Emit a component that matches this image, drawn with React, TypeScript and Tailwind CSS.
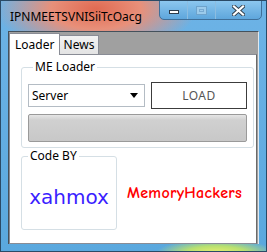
export default function App() {
  return (
    <div
      className="relative flex h-[252px] w-[267px] flex-col overflow-hidden border border-[#2a4a66] bg-[radial-gradient(ellipse_100px_45px_at_95px_8px,#e06a52_0%,#e8907a_45%,transparent_100%),radial-gradient(ellipse_60px_14px_at_215px_252px,#e8f070_0%,#b8e070_50%,transparent_100%),linear-gradient(180deg,#6db3e6_0%,#5aa8de_100%)] font-['Noto_Sans',sans-serif]"
    >
      {/* Title bar */}
      <div className="flex h-[30px] items-start justify-between">
        <span className="ml-[9px] mt-[8px] text-[12px] leading-[16px] text-black">
          IPNMEETSVNISiiTcOacg
        </span>
        <div className="mr-[4px] flex h-[20px] shrink-0 -translate-y-px overflow-hidden rounded-b-[5px] border border-[#3f6f99] bg-[linear-gradient(180deg,#8cc7ef,#5ea6dc)]">
          <div className="flex w-[28px] items-center justify-center border-r border-[#8dbde0]">
            <div className="mt-[3px] h-[4px] w-[10px] border border-[#2d3b4a] bg-white" />
          </div>
          <div className="flex w-[28px] items-center justify-center border-r border-[#8dbde0]">
            <div className="h-[9px] w-[11px] border border-[#6ea3cc] bg-[#9ccbeb] p-[2px]">
              <div className="h-full w-full border border-[#78aad2]" />
            </div>
          </div>
          <div className="flex w-[45px] items-center justify-center">
            <svg width="13" height="11" viewBox="0 0 13 11">
              <path d="M2 1.5 L11 9.5 M11 1.5 L2 9.5" stroke="#34414e" strokeWidth="4" strokeLinecap="square" />
              <path d="M2 1.5 L11 9.5 M11 1.5 L2 9.5" stroke="#ffffff" strokeWidth="2.2" strokeLinecap="square" />
            </svg>
          </div>
        </div>
      </div>

      {/* Client area */}
      <div className="mx-[7px] mb-[7px] flex flex-1 flex-col border-l border-t border-[#44515c] bg-[#a0a0a0] border-r border-r-[#dfe8ef]">
        {/* Tab strip */}
        <div className="flex h-[22px] items-end pt-[1px]">
          <div className="relative z-10 -mb-px flex h-[22px] w-[51px] items-center border border-b-0 border-[#898c95] bg-white pl-[5px] text-[12px] text-black">
            Loader
          </div>
          <div className="flex h-[19px] w-[39px] items-center justify-center border border-b-0 border-l-0 border-[#898c95] bg-[linear-gradient(180deg,#f2f2f2,#e3e3e3)] text-[12px] text-black">
            News
          </div>
        </div>

        {/* Tab page */}
        <div className="mr-[1px] flex flex-1 flex-col border border-[#898c95] border-r-[#6a6a6a] bg-white px-[11px] pt-[5px]">
          <fieldset className="mr-[3px] rounded-[3px] border border-[#d5dfe5] px-[6px] pb-[5px] pt-[8px]">
            <legend className="ml-[5px] px-[2px] text-[12px] leading-[14px] text-black">ME Loader</legend>
            <div className="flex items-center gap-[6px]">
              <div className="flex h-[23px] w-[117px] items-center justify-between border border-[#b4bcc4] bg-white pl-[3px] pr-[6px] text-[12px] text-black">
                <span>Server</span>
                <svg width="8" height="5" viewBox="0 0 8 5">
                  <path d="M0 0 H8 L4 5 Z" fill="#000" />
                </svg>
              </div>
              <div className="flex h-[27px] w-[96px] items-center justify-center border border-[#3c3c3c] bg-white text-[12px] tracking-[0.5px] text-[#555]">
                LOAD
              </div>
            </div>
            <div className="mt-[5px] h-[28px] w-[219px] rounded-[2px] border border-[#9a9a9a] bg-[linear-gradient(180deg,#e6e6e6_0%,#d0d0d0_20%,#c8c8c8_100%)]" />
          </fieldset>

          <div className="mt-[1px] flex items-center">
            <fieldset className="h-[81px] w-[96px] rounded-[3px] border border-[#d5dfe5]">
              <legend className="ml-[6px] px-[2px] text-[12px] leading-[14px] text-black">Code BY</legend>
              <div className="flex h-[70px] items-center justify-center pb-[2px] font-['DejaVu_Sans',sans-serif] text-[20px] text-[#3a1eff]">
                xahmox
              </div>
            </fieldset>
            <div className="ml-[10px] pt-[6px] font-['Comic_Sans_MS','Comic_Neue',cursive] text-[16px] font-semibold tracking-[0.3px] text-[#ff0000]">
              MemoryHackers
            </div>
          </div>
        </div>
      </div>
    </div>
  );
}
